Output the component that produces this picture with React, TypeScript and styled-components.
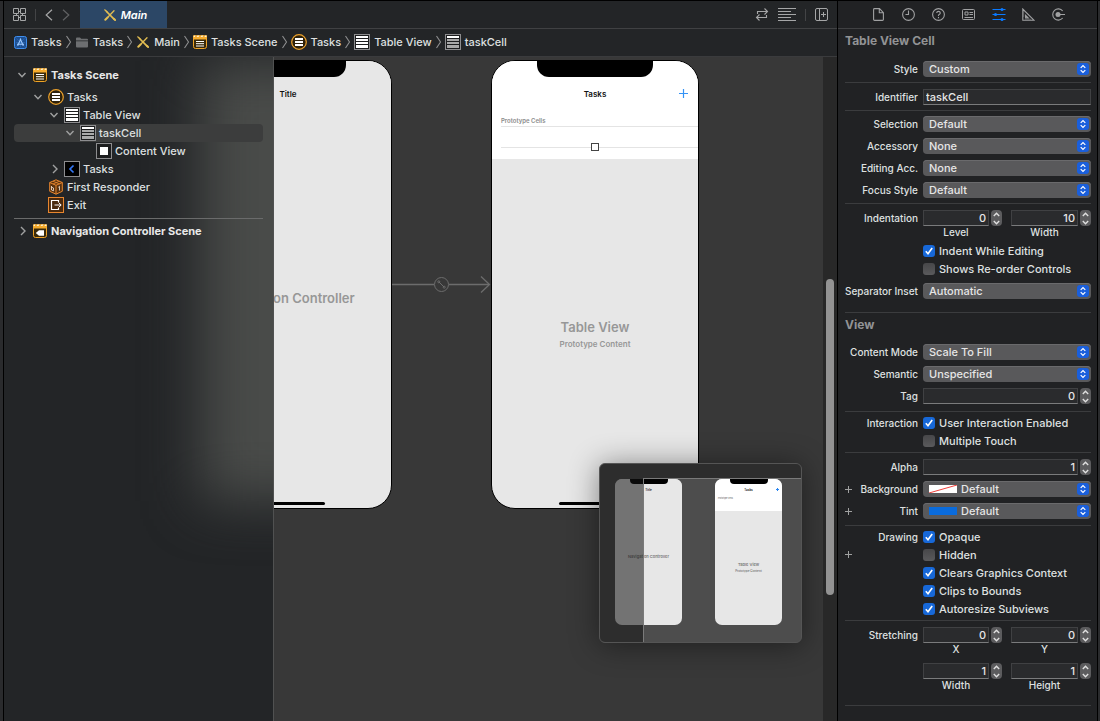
import React, { useId } from "react";
import styled, { createGlobalStyle, css } from "styled-components";

const GlobalStyle = createGlobalStyle`
  *, *::before, *::after { box-sizing: border-box; }
  body {
    margin: 0;
    background: #242528;
    color: #dfe0e0;
    font: 500 11px/14px Inter, "Liberation Sans", sans-serif;
  }
  button, input, select { font: inherit; color: inherit; }
  button { border: 0; padding: 0; margin: 0; background: none; }
  ul, ol { list-style: none; margin: 0; padding: 0; }
  h2, p { margin: 0; }
  svg { display: block; flex: none; }
`;

/* ---------- window frame ---------- */

const Window = styled.div`
  display: flex;
  min-height: 100vh;
  border-top: 1px solid #000;
  background: #232527;
`;

const Edge = styled.div`
  flex: none;
  width: 4px;
  background: #2a2b2d;
  border-right: 1px solid #000;
`;

const RightEdge = styled(Edge)`
  width: 3px;
  border-right: 0;
  border-left: 1px solid #000;
`;

const Editor = styled.main`
  flex: 1;
  min-width: 0;
  display: flex;
  flex-direction: column;
`;

const Bar = styled.header`
  flex: none;
  display: flex;
  align-items: center;
  height: 28px;
  border-bottom: 1px solid #404143;
  color: #a5a6a7;
`;

const BarGroup = styled.div`
  display: flex;
  align-items: center;
  gap: 9px;
  padding: 0 9px;
`;

const FileGroup = styled(BarGroup)`
  padding-right: 10px;
`;

const BarButton = styled.button<{ $dim?: boolean }>`
  display: flex;
  align-items: center;
  justify-content: center;
  color: ${(p) => (p.$dim ? "#606163" : "#a5a6a7")};
`;

const BarDivider = styled.span`
  width: 1px;
  height: 12px;
  background: #434446;
`;

const Spacer = styled.div`
  flex: 1;
`;

const FileTab = styled.button`
  display: flex;
  align-items: center;
  justify-content: center;
  gap: 5px;
  width: 87px;
  height: 27px;
  padding-left: 4px;
  background: #2c4766;
  color: #fff;
  font-style: italic;
  font-weight: 600;
`;

const JumpBar = styled.nav`
  flex: none;
  height: 28px;
  border-bottom: 1px solid #3a3b3d;
  padding-left: 9px;
`;

const CrumbList = styled.ol`
  display: flex;
  align-items: center;
  height: 26px;
`;

const Crumb = styled.li`
  display: flex;
  align-items: center;
  gap: 3px;
  padding-right: 3px;
`;

const CrumbLink = styled.a`
  display: flex;
  align-items: center;
  gap: 4px;
  color: inherit;
  text-decoration: none;
  white-space: nowrap;
`;

const CrumbIcon = styled.span`
  display: flex;
  justify-content: center;
  min-width: 14px;
`;

const Workspace = styled.div`
  flex: 1;
  display: flex;
  min-height: 0;
`;

/* ---------- outline ---------- */

const Outline = styled.aside`
  flex: none;
  position: relative;
  overflow: hidden;
  width: 270px;
  padding: 6px 10px;
  border-right: 1px solid #505151;
  &::before {
    content: "";
    position: absolute;
    left: 196px;
    right: -100px;
    top: 4px;
    height: 440px;
    background: #494b49;
    filter: blur(27px);
  }
`;

const OutlineList = styled.ul`
  position: relative;
`;

const TreeRows = styled(OutlineList)`
  margin-top: 1px;
`;

const Rule = styled.hr`
  position: relative;
  height: 1px;
  margin: 4px 0 0;
  border: 0;
  background: #6a6b6b;
`;

const OutlineRow = styled.li<{ $level: number; $scene?: boolean; $selected?: boolean }>`
  display: flex;
  align-items: center;
  height: ${(p) => (p.$scene ? 24 : 18)}px;
  padding-left: ${(p) => 2 + p.$level * 16}px;
  border-radius: 4px;
  font-weight: ${(p) => (p.$scene ? 700 : 500)};
  color: ${(p) => (p.$scene ? "#e8e8e8" : "#dfe0e0")};
  ${(p) =>
    p.$selected &&
    css`
      background: #3c3d3d;
    `}
`;

const Twisty = styled.button`
  width: 14px;
  height: 12px;
  display: flex;
  align-items: center;
  color: #a0a1a1;
`;

const TwistySpace = styled.span`
  width: 14px;
`;

const RowIcon = styled.span`
  width: 16px;
  margin: 0 3px 0 2px;
  display: flex;
  justify-content: center;
`;

/* ---------- canvas ---------- */

const Canvas = styled.section`
  flex: 1;
  position: relative;
  overflow: hidden;
  min-width: 0;
  background: #383838;
`;

const Phone = styled.article<{ $x: number }>`
  position: absolute;
  left: ${(p) => p.$x}px;
  top: 3px;
  width: 208px;
  height: 449px;
  border-radius: 24px;
  border: 1px solid #000;
  background: #e7e7e7;
  overflow: hidden;
  display: flex;
  flex-direction: column;
`;

const Notch = styled.div`
  align-self: center;
  width: 116px;
  height: 16px;
  border-radius: 0 0 12px 12px;
  background: #000;
`;

const PhoneTop = styled.div<{ $white?: boolean }>`
  display: flex;
  flex-direction: column;
  background: ${(p) => (p.$white ? "#fff" : "#e7e7e7")};
`;

const NavBar = styled.div`
  display: grid;
  grid-template-columns: 1fr auto 1fr;
  align-items: center;
  height: 33px;
  padding: 0 10px;
  color: #111;
  font-size: 8px;
  font-weight: 600;
  & > :nth-child(2) { grid-column: 2; }
  & > :nth-child(3) { justify-self: end; }
`;

const CellHeader = styled.p`
  margin-left: 9px;
  height: 16px;
  line-height: 11px;
  font-size: 6px;
  font-weight: 600;
  color: #8b8b8b;
  padding-top: 5px;
`;

const Cell = styled.div`
  display: flex;
  flex-direction: column;
  align-items: center;
  margin-left: 9px;
  height: 33px;
  border-top: 1px solid #e4e4e4;
  padding: 16px 9px 0 0;
  background: linear-gradient(#e4e4e4, #e4e4e4) 0 20px / 100% 1px no-repeat;
`;

const PhoneBody = styled.div`
  flex: 1;
  display: flex;
  flex-direction: column;
  align-items: center;
  color: #979797;
  font-weight: 600;
`;

const Placeholder = styled.p<{ $top: number }>`
  margin-top: ${(p) => p.$top}px;
  font-size: 13px;
  line-height: 18px;
  white-space: nowrap;
`;

const Caption = styled.p`
  font-size: 8px;
  line-height: 16px;
`;

const HomeBar = styled.div`
  align-self: center;
  width: 73px;
  height: 3px;
  margin-bottom: 3px;
  border-radius: 2px;
  background: #000;
`;

const Segue = styled.svg`
  position: absolute;
  left: 118px;
  top: 217px;
`;

const Minimap = styled.div`
  position: absolute;
  right: 21px;
  top: 406px;
  width: 203px;
  height: 180px;
  border-radius: 6px;
  border: 1px solid #555;
  overflow: hidden;
  background: #4d4d4d;
  box-shadow: 0 2px 30px rgba(0, 0, 0, 0.45);
`;

const MiniPhone = styled.div<{ $x: number }>`
  position: absolute;
  left: ${(p) => p.$x}px;
  top: 15px;
  width: 67px;
  height: 146px;
  border-radius: 7px;
  overflow: hidden;
  background: #e7e7e7;
  display: flex;
  flex-direction: column;
`;

const MiniTop = styled.div<{ $white?: boolean }>`
  display: flex;
  flex-direction: column;
  height: 32px;
  background: ${(p) => (p.$white ? "#fff" : "#e7e7e7")};
`;

const MiniNotch = styled.div`
  align-self: center;
  width: 38px;
  height: 5px;
  border-radius: 0 0 4px 4px;
  background: #000;
`;

const MiniNav = styled(NavBar)`
  height: 11px;
  padding: 0 3px;
  font-size: 3px;
  line-height: 4px;
`;

const MiniHeader = styled.p`
  margin-left: 3px;
  font-size: 2px;
  line-height: 6px;
  font-weight: 600;
  color: #777;
`;

const MiniText = styled.p<{ $top: number; $size: number }>`
  margin-top: ${(p) => p.$top}px;
  text-align: center;
  font-size: ${(p) => p.$size}px;
  line-height: 6px;
  font-weight: 600;
  color: #777;
  white-space: nowrap;
`;

const MiniViewport = styled.div`
  position: absolute;
  left: 43px;
  top: 14px;
  right: 0;
  bottom: 0;
  border: 1px solid #7a7a7a;
  border-width: 1px 0 0 1px;
  box-shadow: 0 0 0 100px rgba(20, 20, 20, 0.55);
`;

const ScrollTrack = styled.div`
  flex: none;
  width: 14px;
  padding: 222px 3px 0;
  background: #282828;
`;

const ScrollThumb = styled.div`
  height: 316px;
  width: 8px;
  border-radius: 4px;
  background: #939393;
`;

/* ---------- inspector ---------- */

const Inspector = styled.aside`
  flex: none;
  width: 260px;
  border-left: 1px solid #000;
  background: #212224;
`;

const InspectorTabs = styled(Bar)`
  justify-content: center;
  padding-left: 2px;
`;

const TabButton = styled.button<{ $active?: boolean }>`
  width: 30px;
  height: 24px;
  display: flex;
  align-items: center;
  justify-content: center;
  color: ${(p) => (p.$active ? "#0a7aff" : "#a0a1a2")};
`;

const InspectorBody = styled.form`
  padding: 0 6px;
`;

const Title = styled.h2`
  height: 26px;
  padding-left: 1px;
  font-size: 12px;
  line-height: 24px;
  font-weight: 700;
  color: #929395;
`;

const Group = styled.fieldset<{ $pad?: string; $gap?: number }>`
  display: flex;
  flex-direction: column;
  gap: ${(p) => p.$gap ?? 6}px;
  margin: 0 0 0 1px;
  min-width: 0;
  padding: ${(p) => p.$pad ?? "6px 0 5px"};
  border: 0;
  border-bottom: 1px solid #3b3c3e;
`;

const Row = styled.div`
  display: grid;
  grid-template-columns: 12px 61px minmax(0, 1fr);
  align-items: start;
`;

const labelStyle = css`
  grid-column: 2;
  grid-row: 1;
  justify-self: end;
  line-height: 16px;
  white-space: nowrap;
  font-size: 10px;
`;

const RowLabel = styled.label`
  ${labelStyle}
`;

const RowText = styled.span`
  ${labelStyle}
`;

const CheckCaption = styled(RowText)`
  line-height: 18px;
`;

const AddButton = styled.button`
  grid-column: 1;
  grid-row: 1;
  height: 16px;
  width: 7px;
  display: flex;
  align-items: center;
  justify-content: center;
  color: #a0a1a1;
`;

const Control = styled.div`
  grid-column: 3;
  grid-row: 1;
  margin-left: 5px;
  min-width: 0;
`;

const SelectBox = styled.div`
  display: grid;
  grid-template-columns: auto 1fr auto;
  align-items: center;
  height: 16px;
  border-radius: 4px;
  background: #59595b;
  box-shadow: inset 0 1px 0 #6a6a6c;
  & > * { grid-row: 1; }
`;

const NativeSelect = styled.select<{ $swatch?: boolean }>`
  grid-column: 1 / -1;
  width: 100%;
  height: 16px;
  padding: 0 16px 0 ${(p) => (p.$swatch ? 38 : 6)}px;
  border: 0;
  appearance: none;
  background: none;
  line-height: 16px;
  color: #e6e6e6;
`;

const SelectKnob = styled.span`
  grid-column: 3;
  margin-right: 2px;
  width: 12px;
  height: 12px;
  border-radius: 3px;
  background: #1a5fdc;
  pointer-events: none;
`;

const Swatch = styled.svg`
  grid-column: 1;
  margin-left: 6px;
  pointer-events: none;
`;

const NumberLine = styled.div`
  display: flex;
  gap: 2px;
`;

const Pair = styled.div`
  display: grid;
  grid-template-columns: 79fr 80fr;
  column-gap: 9px;
  row-gap: 7px;
`;

const NumberUnder = styled.label`
  display: block;
  height: 13px;
  margin-right: 13px;
  text-align: center;
  font-size: 10px;
  line-height: 13px;
`;

const TextInput = styled.input<{ $number?: boolean }>`
  display: block;
  flex: 1;
  width: 100%;
  min-width: 0;
  height: 16px;
  padding: 0 2px;
  border: 1px solid #404143;
  border-bottom-color: #7a7b7c;
  background: #2a2b2d;
  outline: 0;
  color: #e6e6e6;
  text-align: ${(p) => (p.$number ? "right" : "left")};
`;

const Stepper = styled.span`
  flex: none;
  display: flex;
  flex-direction: column;
  width: 11px;
  height: 16px;
  border-radius: 4px;
  background: #5c5c5e;
  color: #e0e0e0;
`;

const StepButton = styled.button`
  height: 8px;
  display: flex;
  align-items: center;
  justify-content: center;
`;

const CheckLabel = styled.label`
  display: grid;
  grid-template-columns: 12px 1fr;
  column-gap: 4px;
  align-items: center;
  height: 18px;
  white-space: nowrap;
`;

const CheckBox = styled.input`
  grid-area: 1 / 1;
  appearance: none;
  margin: 0;
  width: 12px;
  height: 12px;
  border-radius: 3px;
  background: linear-gradient(#474749, #5a5a5c);
  &:checked { background: #1768d8; }
  &:not(:checked) + svg { visibility: hidden; }
`;

const Tick = styled.svg`
  grid-area: 1 / 1;
  pointer-events: none;
`;

const Checks = styled.div`
  display: flex;
  flex-direction: column;
`;

const IndentBlock = styled.div`
  display: flex;
  flex-direction: column;
  gap: 3px;
`;

/* ---------- icons ---------- */

const Chevron = ({ dir }: { dir: "left" | "right" }) => (
  <svg width="8" height="12" viewBox="0 0 8 12" fill="none" stroke="currentColor" strokeWidth="1.2">
    <path d={dir === "left" ? "M7 .8 1.2 6 7 11.2" : "M1 .8 6.8 6 1 11.2"} />
  </svg>
);

const CrumbChevron = () => (
  <svg width="7" height="14" viewBox="0 0 7 14" fill="none" stroke="#8e8f90" strokeWidth="1.1">
    <path d="M1.5 1 5.5 7l-4 6" />
  </svg>
);

const GridIcon = () => (
  <svg width="13" height="13" viewBox="0 0 13 13" fill="none" stroke="currentColor">
    <path d="M.5.5h5v5h-5zM7.5.5h5v5h-5zM.5 7.5h5v5h-5zM7.5 7.5h5v5h-5zM5.5 3.5h2M3.5 5.5v2M5.5 9.5h2M9.5 5.5v2" />
  </svg>
);

const SwapIcon = () => (
  <svg width="14" height="13" viewBox="0 0 14 13" fill="none" stroke="currentColor" strokeWidth="1.1">
    <path d="M2.5 6V3.5h10M9.5.5l3 3-3 3M11.5 7v2.5h-10M4.500 6.500l-3 3 3 3" />
  </svg>
);

const LinesIcon = () => (
  <svg width="18" height="13" viewBox="0 0 18 13" stroke="currentColor">
    <path d="M0 .5h18M0 3.5h13M0 6.5h18M0 9.5h13M0 12.5h18" />
  </svg>
);

const AddPanelIcon = () => (
  <svg width="13" height="13" viewBox="0 0 13 13" fill="none" stroke="currentColor">
    <rect x=".5" y=".5" width="12" height="12" rx="1.5" />
    <path d="M4.5.5v12M8.5 4v5M6 6.5h5" />
  </svg>
);

const ToolsIcon = () => (
  <svg width="12" height="12" viewBox="0 0 12 12" fill="none" stroke="#e2bd52" strokeLinecap="round">
    <path d="M2.5 2.5 9.8 9.8" strokeWidth="1.7" />
    <path d="M.7.8 3 2.8" strokeWidth="1.2" />
    <path d="M10 1.8 4.5 7.5" strokeWidth="1.3" />
    <path d="M3.8 8.2 1.3 10.8" strokeWidth="2" />
    <path d="m9.8 9.8 1.3 1.2" strokeWidth="2" />
  </svg>
);

const AppIcon = () => (
  <svg width="13" height="13" viewBox="0 0 13 13" fill="none">
    <rect x=".5" y=".5" width="12" height="12" rx="2" fill="#1d4f91" stroke="#3f8ff0" />
    <path d="M2 6.5h9M6.5 2v9M2.5 2.5l8 8M10.5 2.5l-8 8" stroke="#2f6fbe" strokeWidth=".6" />
    <path d="M6.8 2.8 3.7 9.8M6.2 2.8l3.1 7M3 8.300h7" stroke="#9cc9ff" strokeWidth="1.1" />
  </svg>
);

const FolderIcon = () => (
  <svg width="12" height="11" viewBox="0 0 12 11" fill="#6d6f71">
    <path d="M0 1.5Q0 .5 1 .5h3l1.2 1.2H11q1 0 1 1v.8H0z" />
    <path d="M0 4.3h12V9.5q0 1-1 1H1q-1 0-1-1z" />
  </svg>
);

const SceneIcon = ({ nav }: { nav?: boolean }) => (
  <svg width="14" height="14" viewBox="0 0 14 14">
    <rect x=".5" y="1" width="13" height="12.5" rx="2" fill="#3a2a0a" stroke="#f0a326" />
    <path d="M0 .3h14V4.5H0z" fill="#f5ab2c" />
    <path d="M1 .5h1.5L1.8 2H.5zM4.5.5h2L5.5 2h-2zM8.5.5h2L9.5 2h-2zM12 .5h1.5V2h-2z" fill="#fff0d0" />
    {nav ? (
      <path d="M2.8 9 6 6.3h5v5.4H6z" fill="#fff" />
    ) : (
      <path d="M3 6.5h8M3 8.7h8M3 11h8" stroke="#fff" />
    )}
  </svg>
);

const ControllerIcon = () => (
  <svg width="16" height="16" viewBox="0 0 16 16">
    <circle cx="8" cy="8" r="7.3" fill="#2e220c" stroke="#eca22c" strokeWidth="1.2" />
    <path d="M4 5h8M4 8h8M4 11h8" stroke="#fff" strokeWidth="2" />
  </svg>
);

const TableIcon = ({ cell }: { cell?: boolean }) => (
  <svg width="16" height="16" viewBox="0 0 16 16">
    <rect x=".5" y=".5" width="15" height="15" fill="#1d1e1f" stroke="#8d8d8f" />
    <path d="M2 3h12" stroke="#fff" strokeWidth="2" />
    <path d="M2 6h12M2 9h12M2 12h12" stroke={cell ? "#a9a9a9" : "#fff"} strokeWidth="2" />
    <path d="M2 13.500h12" stroke={cell ? "#a9a9a9" : "#fff"} strokeWidth="1" />
  </svg>
);

const ViewIcon = () => (
  <svg width="16" height="16" viewBox="0 0 16 16">
    <rect x=".5" y=".5" width="15" height="15" fill="#1d1e1f" stroke="#8d8d8f" />
    <path d="M4 4h8v8H4z" fill="#fff" />
  </svg>
);

const NavItemIcon = () => (
  <svg width="16" height="16" viewBox="0 0 16 16" fill="none">
    <rect x=".5" y=".5" width="15" height="15" fill="#000" stroke="#8d8d8f" />
    <path d="M9.5 4.5 6 8l3.5 3.5" stroke="#3478f6" strokeWidth="1.7" />
  </svg>
);

const ResponderIcon = () => (
  <svg width="14" height="16" viewBox="0 0 14 16" fill="none" stroke="#e8862e" strokeLinejoin="round">
    <path d="M7 .8 13.3 3.5v8.8L7 15.2.7 12.3V3.5z" fill="#57310f" />
    <path d="M.7 3.5 7 6.3l6.3-2.8M7 6.3v8.9" />
    <path d="M4 2.2 10.5 5M10.5 2.2 4 5" strokeWidth=".8" />
    <path d="M2.5 7v4l2 .8V9l-2-.8M9.3 8.3l1.2-1v4.2" stroke="#e8d6c6" strokeWidth=".9" />
  </svg>
);

const ExitIcon = () => (
  <svg width="16" height="16" viewBox="0 0 16 16" fill="none">
    <rect x=".5" y=".5" width="15" height="15" fill="#4a2a0e" stroke="#e8862e" />
    <path d="M10.5 5.5V3.5h-7v9h7v-2" stroke="#fff" strokeWidth="1.2" />
    <path d="M6.5 8H13M11 6l2.2 2L11 10" stroke="#fff" />
  </svg>
);

const TwistyIcon = ({ open }: { open: boolean }) => (
  <svg width="12" height="10" viewBox="0 0 12 10" fill="none" stroke="currentColor" strokeWidth="1.4">
    <path d={open ? "M2.5 3 6 6.8 9.5 3" : "M5 1 9 5l-4 4"} />
  </svg>
);

const PlusIcon = () => (
  <svg width="7" height="7" viewBox="0 0 7 7" stroke="currentColor">
    <path d="M3.5 0v7M0 3.5h7" />
  </svg>
);

const FileIcon = () => (
  <svg width="11" height="13" viewBox="0 0 11 13" fill="none" stroke="currentColor" strokeWidth="1.1">
    <path d="M.6 1.5q0-.9.9-.9h5l3.9 4v6.9q0 .9-.9.9h-8q-.9 0-.9-.9zM6.3.8v4h4" />
  </svg>
);

const ClockIcon = () => (
  <svg width="13" height="13" viewBox="0 0 13 13" fill="none" stroke="currentColor" strokeWidth="1.1">
    <circle cx="6.5" cy="6.5" r="5.9" />
    <path d="M6.5 2.5v4h-3" />
  </svg>
);

const HelpIcon = () => (
  <svg width="13" height="13" viewBox="0 0 13 13" fill="none" stroke="currentColor" strokeWidth="1.1">
    <circle cx="6.5" cy="6.5" r="5.9" />
    <path d="M4.7 5Q4.8 3.4 6.5 3.4T8.3 5Q8.3 5.9 7.2 6.5T6.5 7.9M6.5 9v1.2" />
  </svg>
);

const IdentityIcon = () => (
  <svg width="13" height="11" viewBox="0 0 13 11" fill="none" stroke="currentColor">
    <rect x=".5" y=".5" width="12" height="10" rx="1" />
    <path d="M3 3h3v3H3zM7.5 3.5H11M7.5 5.5H11M2.5 8.5H11" />
  </svg>
);

const AttributesIcon = () => (
  <svg width="14" height="13" viewBox="0 0 14 13" stroke="currentColor" strokeWidth="1.2">
    <path d="M.5 1.500h13M.5 6.5h13M.5 11.500h13" />
    <g fill="currentColor" stroke="none">
      <circle cx="10" cy="1.500" r="1.500" />
      <circle cx="3.5" cy="6.5" r="1.500" />
      <circle cx="10" cy="11.500" r="1.500" />
    </g>
  </svg>
);

const SizeIcon = () => (
  <svg width="13" height="13" viewBox="0 0 13 13" fill="none" stroke="currentColor" strokeWidth="1.1">
    <path d="M.8 1v11.300h11.300zM3.600 7.300v2.600h2.600z" />
    <path d="M1 4h1.300M1 6h1.300M1 8h1.300M4 12v-1.300M6 12v-1.300M8 12v-1.300" strokeWidth=".6" />
  </svg>
);

const ConnectionsIcon = () => (
  <svg width="13" height="13" viewBox="0 0 13 13" fill="none" stroke="currentColor" strokeWidth="1.1">
    <path d="M10.7 3A5.6 5.6 0 1 0 10.7 10M6 6.5h7" />
    <circle cx="6" cy="6.5" r="2.5" fill="currentColor" stroke="none" />
  </svg>
);

const Caret = ({ up }: { up?: boolean }) => (
  <svg width="7" height="5" viewBox="0 0 7 5" fill="none" stroke="currentColor" strokeWidth="1.4">
    <path d={up ? "M.8 4 3.5 1.3 6.2 4" : "M.8 1 3.5 3.7 6.2 1"} />
  </svg>
);

/* ---------- form parts ---------- */

type SelectRowProps = { label: string; value: string; swatch?: "none" | "blue"; add?: boolean };

const SelectRow = ({ label, value, swatch, add }: SelectRowProps) => {
  const id = useId();
  return (
    <Row>
      {add && (
        <AddButton type="button" aria-label={`Add ${label} variation`}>
          <PlusIcon />
        </AddButton>
      )}
      <RowLabel htmlFor={id}>{label}</RowLabel>
      <Control>
        <SelectBox>
          <NativeSelect id={id} $swatch={!!swatch} defaultValue={value}>
            <option>{value}</option>
          </NativeSelect>
          {swatch && (
            <Swatch width="28" height="8" viewBox="0 0 28 8">
              <rect width="28" height="8" fill={swatch === "blue" ? "#0a6bdc" : "#fff"} />
              {swatch === "none" && <path d="M0 8 28 0" stroke="#f0413c" />}
            </Swatch>
          )}
          <SelectKnob>
            <svg width="12" height="12" viewBox="0 0 12 12" fill="none" stroke="#fff" strokeWidth="1.2">
              <path d="M3.7 4.8 6 2.5l2.3 2.3M3.7 7.2 6 9.5l2.3-2.3" />
            </svg>
          </SelectKnob>
        </SelectBox>
      </Control>
    </Row>
  );
};

const NumberField = ({ id, value }: { id: string; value: number }) => (
  <NumberLine>
    <TextInput $number id={id} inputMode="numeric" defaultValue={value} />
    <Stepper>
      <StepButton type="button" aria-label="Increase">
        <Caret up />
      </StepButton>
      <StepButton type="button" aria-label="Decrease">
        <Caret />
      </StepButton>
    </Stepper>
  </NumberLine>
);

const NumberRow = ({ label, value }: { label: string; value: number }) => {
  const id = useId();
  return (
    <Row>
      <RowLabel htmlFor={id}>{label}</RowLabel>
      <Control>
        <NumberField id={id} value={value} />
      </Control>
    </Row>
  );
};

const TextRow = ({ label, value }: { label: string; value: string }) => {
  const id = useId();
  return (
    <Row>
      <RowLabel htmlFor={id}>{label}</RowLabel>
      <Control>
        <TextInput id={id} defaultValue={value} />
      </Control>
    </Row>
  );
};

const PairRow = ({ label, items }: { label: string; items: [string, number][] }) => {
  const id = useId();
  return (
    <Row>
      <RowText>{label}</RowText>
      <Control>
        <Pair>
          {items.map(([name, value]) => (
            <div key={name}>
              <NumberField id={id + name} value={value} />
              <NumberUnder htmlFor={id + name}>{name}</NumberUnder>
            </div>
          ))}
        </Pair>
      </Control>
    </Row>
  );
};

type CheckRowProps = { label?: string; text: string; checked?: boolean; add?: boolean };

const CheckRow = ({ label, text, checked, add }: CheckRowProps) => (
  <Row>
    {add && (
      <AddButton type="button" aria-label={`Add ${text} variation`}>
        <PlusIcon />
      </AddButton>
    )}
    {label && <CheckCaption>{label}</CheckCaption>}
    <Control>
      <CheckLabel>
        <CheckBox type="checkbox" defaultChecked={checked} />
        <Tick width="12" height="12" viewBox="0 0 12 12" fill="none" stroke="#fff" strokeWidth="1.6">
          <path d="M2.8 6.3 5 8.8 9.2 3" />
        </Tick>
        {text}
      </CheckLabel>
    </Control>
  </Row>
);

/* ---------- data ---------- */

const crumbs: [React.ReactNode, string][] = [
  [<AppIcon />, "Tasks"],
  [<FolderIcon />, "Tasks"],
  [<ToolsIcon />, "Main"],
  [<SceneIcon />, "Tasks Scene"],
  [<ControllerIcon />, "Tasks"],
  [<TableIcon />, "Table View"],
  [<TableIcon cell />, "taskCell"],
];

type Item = { level: number; name: string; icon: React.ReactNode; open?: boolean; selected?: boolean };

const outline: Item[] = [
  { level: 1, name: "Tasks", icon: <ControllerIcon />, open: true },
  { level: 2, name: "Table View", icon: <TableIcon />, open: true },
  { level: 3, name: "taskCell", icon: <TableIcon cell />, open: true, selected: true },
  { level: 4, name: "Content View", icon: <ViewIcon /> },
  { level: 2, name: "Tasks", icon: <NavItemIcon />, open: false },
  { level: 1, name: "First Responder", icon: <ResponderIcon /> },
  { level: 1, name: "Exit", icon: <ExitIcon /> },
];

const OutlineItem = ({ item, scene }: { item: Item; scene?: boolean }) => (
  <OutlineRow $level={item.level} $scene={scene} $selected={item.selected}>
    {item.open === undefined ? (
      <TwistySpace />
    ) : (
      <Twisty aria-label={`Toggle ${item.name}`} aria-expanded={item.open}>
        <TwistyIcon open={item.open} />
      </Twisty>
    )}
    <RowIcon>{item.icon}</RowIcon>
    {item.name}
  </OutlineRow>
);

const tabs: [string, React.ReactNode][] = [
  ["File", <FileIcon />],
  ["History", <ClockIcon />],
  ["Help", <HelpIcon />],
  ["Identity", <IdentityIcon />],
  ["Attributes", <AttributesIcon />],
  ["Size", <SizeIcon />],
  ["Connections", <ConnectionsIcon />],
];

export default function App() {
  return (
    <>
      <GlobalStyle />
      <Window>
        <Edge />
        <Editor>
          <Bar>
            <FileGroup>
              <BarButton aria-label="Related items"><GridIcon /></BarButton>
              <BarDivider />
              <BarButton aria-label="Back"><Chevron dir="left" /></BarButton>
              <BarButton aria-label="Forward" $dim><Chevron dir="right" /></BarButton>
            </FileGroup>
            <FileTab>
              <ToolsIcon />
              Main
            </FileTab>
            <Spacer />
            <BarGroup>
              <BarButton aria-label="Refresh"><SwapIcon /></BarButton>
              <BarButton aria-label="Adjust editor"><LinesIcon /></BarButton>
              <BarDivider />
              <BarButton aria-label="Add editor"><AddPanelIcon /></BarButton>
            </BarGroup>
          </Bar>
          <JumpBar aria-label="Jump bar">
            <CrumbList>
              {crumbs.map(([icon, name], i) => (
                <Crumb key={i}>
                  <CrumbLink href="#">
                    <CrumbIcon>{icon}</CrumbIcon>
                    {name}
                  </CrumbLink>
                  {i < crumbs.length - 1 && <CrumbChevron />}
                </Crumb>
              ))}
            </CrumbList>
          </JumpBar>
          <Workspace>
            <Outline>
              <OutlineList>
                <OutlineItem scene item={{ level: 0, name: "Tasks Scene", icon: <SceneIcon />, open: true }} />
              </OutlineList>
              <TreeRows>
                {outline.map((item, i) => (
                  <OutlineItem key={i} item={item} />
                ))}
              </TreeRows>
              <Rule />
              <OutlineList>
                <OutlineItem
                  scene
                  item={{ level: 0, name: "Navigation Controller Scene", icon: <SceneIcon nav />, open: false }}
                />
              </OutlineList>
            </Outline>
            <Canvas>
              <Phone $x={-90}>
                <PhoneTop>
                  <Notch />
                  <NavBar>
                    <span />
                    <span>Title</span>
                  </NavBar>
                </PhoneTop>
                <PhoneBody>
                  <Placeholder $top={179}>Navigation Controller</Placeholder>
                </PhoneBody>
                <HomeBar />
              </Phone>
              <Segue width="99" height="20" viewBox="0 0 99 20" fill="none" stroke="#6c6c6c">
                <path d="M0 10.5h42M57 10.5h40" strokeWidth="1.5" />
                <path d="M89 2.5 97.5 10.5 89 18.5" strokeWidth="1.3" />
                <circle cx="49.5" cy="10.5" r="7" />
                <path d="m47 8 5 5" />
                <circle cx="46.8" cy="7.8" r="1" />
                <circle cx="52.2" cy="13.2" r="1" />
              </Segue>
              <Phone $x={217}>
                <PhoneTop $white>
                  <Notch />
                  <NavBar>
                    <span />
                    <span>Tasks</span>
                    <svg width="9" height="9" viewBox="0 0 9 9" stroke="#3593f5" strokeWidth="1.2">
                      <path d="M4.5 0v9M0 4.5h9" />
                    </svg>
                  </NavBar>
                  <CellHeader>Prototype Cells</CellHeader>
                  <Cell>
                    <svg width="8" height="8" viewBox="0 0 8 8" fill="#fff" stroke="#444">
                      <rect x=".5" y=".5" width="7" height="7" />
                    </svg>
                  </Cell>
                </PhoneTop>
                <PhoneBody>
                  <Placeholder $top={159}>Table View</Placeholder>
                  <Caption>Prototype Content</Caption>
                </PhoneBody>
                <HomeBar />
              </Phone>
              <Minimap>
                <MiniPhone $x={15}>
                  <MiniTop>
                    <MiniNotch />
                    <MiniNav>
                      <span />
                      <span>Title</span>
                    </MiniNav>
                  </MiniTop>
                  <MiniText $top={43} $size={4}>Navigation Controller</MiniText>
                </MiniPhone>
                <MiniPhone $x={115}>
                  <MiniTop $white>
                    <MiniNotch />
                    <MiniNav>
                      <span />
                      <span>Tasks</span>
                      <svg width="3" height="3" viewBox="0 0 3 3" stroke="#2a86f0">
                        <path d="M1.5 0v3M0 1.5h3" />
                      </svg>
                    </MiniNav>
                    <MiniHeader>Prototype Cells</MiniHeader>
                  </MiniTop>
                  <MiniText $top={51} $size={4}>Table View</MiniText>
                  <MiniText $top={0} $size={3}>Prototype Content</MiniText>
                </MiniPhone>
                <MiniViewport />
              </Minimap>
            </Canvas>
            <ScrollTrack>
              <ScrollThumb />
            </ScrollTrack>
          </Workspace>
        </Editor>
        <Inspector>
          <InspectorTabs>
            {tabs.map(([name, icon]) => (
              <TabButton key={name} aria-label={`${name} inspector`} $active={name === "Attributes"}>
                {icon}
              </TabButton>
            ))}
          </InspectorTabs>
          <InspectorBody>
            <Title>Table View Cell</Title>
            <Group>
              <SelectRow label="Style" value="Custom" />
            </Group>
            <Group>
              <TextRow label="Identifier" value="taskCell" />
            </Group>
            <Group $pad="5px 0">
              <SelectRow label="Selection" value="Default" />
              <SelectRow label="Accessory" value="None" />
              <SelectRow label="Editing Acc." value="None" />
              <SelectRow label="Focus Style" value="Default" />
            </Group>
            <Group $pad="6px 0 13px" $gap={5}>
              <IndentBlock>
                <PairRow label="Indentation" items={[["Level", 0], ["Width", 10]]} />
                <Checks>
                  <CheckRow text="Indent While Editing" checked />
                  <CheckRow text="Shows Re-order Controls" />
                </Checks>
              </IndentBlock>
              <SelectRow label="Separator Inset" value="Automatic" />
            </Group>
            <Title>View</Title>
            <Group $pad="5px 0 7px">
              <SelectRow label="Content Mode" value="Scale To Fill" />
              <SelectRow label="Semantic" value="Unspecified" />
              <NumberRow label="Tag" value={0} />
            </Group>
            <Group $pad="2px 0">
              <Checks>
                <CheckRow label="Interaction" text="User Interaction Enabled" checked />
                <CheckRow text="Multiple Touch" />
              </Checks>
            </Group>
            <Group $pad="6px 0">
              <NumberRow label="Alpha" value={1} />
              <SelectRow label="Background" value="Default" swatch="none" add />
              <SelectRow label="Tint" value="Default" swatch="blue" add />
            </Group>
            <Group $pad="2px 0">
              <Checks>
                <CheckRow label="Drawing" text="Opaque" checked />
                <CheckRow text="Hidden" add />
                <CheckRow text="Clears Graphics Context" checked />
                <CheckRow text="Clips to Bounds" checked />
                <CheckRow text="Autoresize Subviews" checked />
              </Checks>
            </Group>
            <Group $pad="6px 0 13px">
              <PairRow label="Stretching" items={[["X", 0], ["Y", 0], ["Width", 1], ["Height", 1]]} />
            </Group>
          </InspectorBody>
        </Inspector>
        <RightEdge />
      </Window>
    </>
  );
}
